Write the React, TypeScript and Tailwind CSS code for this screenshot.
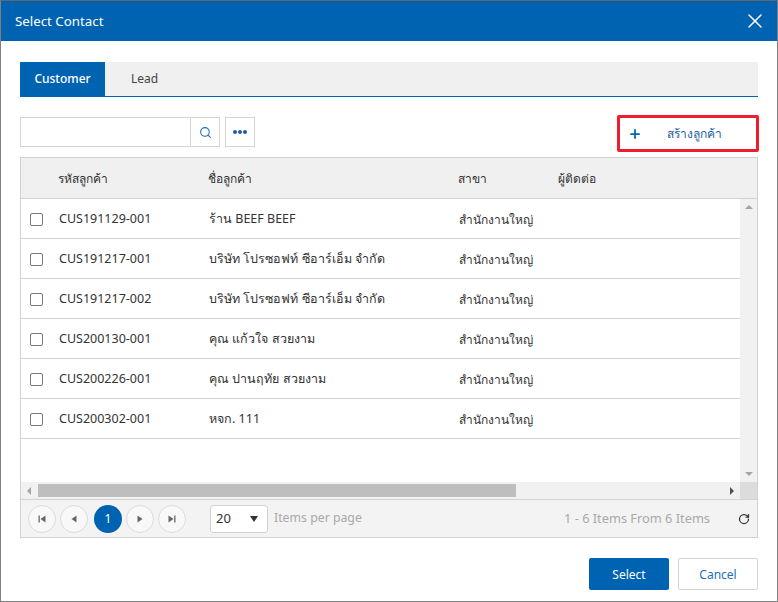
import React from "react";
import { Plus, RotateCw, Search, X } from "lucide-react";

const font = "font-['Noto_Sans',Tahoma,sans-serif]";

const rows = [
  { code: "CUS191129-001", name: "ร้าน BEEF BEEF" },
  { code: "CUS191217-001", name: "บริษัท โปรซอฟท์ ซีอาร์เอ็ม จำกัด" },
  { code: "CUS191217-002", name: "บริษัท โปรซอฟท์ ซีอาร์เอ็ม จำกัด" },
  { code: "CUS200130-001", name: "คุณ แก้วใจ สวยงาม" },
  { code: "CUS200226-001", name: "คุณ ปานฤทัย สวยงาม" },
  { code: "CUS200302-001", name: "หจก. 111" },
];

function PageButton({ d }: { d: string }) {
  return (
    <button className="flex h-7 w-7 items-center justify-center rounded-full border border-[#dcdcdc] bg-[#f8f8f8]">
      <svg width="10" height="10" viewBox="0 0 10 10" fill="#666666">
        <path d={d} />
      </svg>
    </button>
  );
}

export default function App() {
  return (
    <div className={`${font} flex h-[602px] w-[778px] flex-col border border-t-[#666666] border-x-[#808080] border-b-[#808080] bg-white text-xs text-[#333333]`}>
      {/* header */}
      <div className="flex h-10 shrink-0 items-center justify-between bg-[#0063b1] pl-[14px] pr-[10px] text-white">
        <span className="pt-[2px] text-[13.3px]">Select Contact</span>
        <X size={24} strokeWidth={1.5} />
      </div>

      <div className="flex flex-1 flex-col px-[19px]">
        {/* tabs */}
        <div className="mt-[21px] flex h-[35px] border-b border-[#0063b1] bg-[#f0f0f0]">
          <div className="flex w-[85px] items-center justify-center bg-[#0063b1] font-medium text-white">Customer</div>
          <div className="ml-[26px] flex items-center text-[#444444]">Lead</div>
        </div>

        {/* toolbar */}
        <div className="mt-[18px] flex h-[38px] items-start">
          <div className="mt-[2px] flex h-[30px] w-[200px] border border-[#d5d5d5]">
            <div className="flex-1" />
            <div className="flex w-[29px] items-center justify-center border-l border-[#d5d5d5] text-[#1e6fb8]">
              <Search size={13} strokeWidth={2} />
            </div>
          </div>
          <div className="ml-[5px] mt-[2px] flex h-[30px] w-[30px] items-center justify-center gap-[1.5px] border border-[#d5d5d5]">
            <span className="h-[3.5px] w-[3.5px] rounded-full bg-[#1e5f9f]" />
            <span className="h-[3.5px] w-[3.5px] rounded-full bg-[#1e5f9f]" />
            <span className="h-[3.5px] w-[3.5px] rounded-full bg-[#1e5f9f]" />
          </div>
          <div className="ml-auto mr-[-1px] flex h-[37px] w-[142px] items-center rounded-[2px] border-[3px] border-[#ed1c2e] pl-[8px]">
            <Plus size={14} strokeWidth={3} className="text-[#0063b1]" />
            <span className="ml-[25px] text-[#1e5f9f]">สร้างลูกค้า</span>
          </div>
        </div>

        {/* grid */}
        <div className="mt-[4px] flex h-[381px] flex-col border border-[#d2d2d2]">
          <div className="flex h-[41px] shrink-0 items-center border-b border-[#d2d2d2] bg-[#f0f0f0] pt-[2px] font-medium">
            <span className="ml-[37px] w-[150px]">รหัสลูกค้า</span>
            <span className="w-[250px]">ชื่อลูกค้า</span>
            <span className="w-[100px]">สาขา</span>
            <span>ผู้ติดต่อ</span>
          </div>

          <div className="flex min-h-0 flex-1">
            <div className="flex-1">
              {rows.map((row) => (
                <div key={row.code} className="flex h-10 items-center border-b border-[#d2d2d2] text-[12.5px]">
                  <span className="ml-[9px] mt-[1px] h-[13px] w-[13px] rounded-[2px] border border-[#777777] bg-white" />
                  <span className="ml-[16px] w-[150px] pt-[2px]">{row.code}</span>
                  <span className="w-[250px] pt-[2px]">{row.name}</span>
                  <span className="whitespace-nowrap pt-[2px] text-xs">สำนักงานใหญ่</span>
                </div>
              ))}
            </div>
            <div className="flex w-[17px] flex-col items-center justify-between bg-[#f1f1f1] py-[6px]">
              <span className="h-0 w-0 border-x-[4px] border-b-[4px] border-x-transparent border-b-[#a3a3a3]" />
              <span className="h-0 w-0 border-x-[4px] border-t-[4px] border-x-transparent border-t-[#a3a3a3]" />
            </div>
          </div>

          {/* horizontal scrollbar */}
          <div className="flex h-[18px] shrink-0 items-center border-b border-[#d2d2d2] bg-[#f1f1f1]">
            <span className="ml-[6px] h-0 w-0 border-y-[4px] border-r-[4px] border-y-transparent border-r-[#a3a3a3]" />
            <div className="ml-[7px] h-[13px] w-[478px] bg-[#bebebe]" />
            <span className="ml-auto mr-[6px] h-0 w-0 border-y-[4px] border-l-[4px] border-y-transparent border-l-[#505050]" />
            <div className="h-full w-[17px] bg-[#dcdcdc]" />
          </div>

          {/* pager */}
          <div className="flex h-[37px] shrink-0 items-center bg-[#f3f3f3] pl-[7px] pr-[7px]">
            <div className="flex items-center gap-[4px]">
              <PageButton d="M1.5 1.5h1.3v7H1.5zM8.5 1.5v7L3.5 5z" />
              <PageButton d="M7.5 1.5v7L2.5 5z" />
              <button className="ml-[2px] flex h-7 w-7 items-center justify-center rounded-full bg-[#0063b1] text-white">1</button>
              <PageButton d="M2.5 1.5v7L7.5 5z" />
              <PageButton d="M8.5 1.5H7.2v7h1.3zM1.5 1.5v7L6.5 5z" />
            </div>
            <div className="ml-[24px] flex h-7 w-[58px] items-center justify-between rounded-[3px] border border-[#d2d2d2] bg-white pl-[5px] pr-[9px] text-[13px]">
              <span>20</span>
              <span className="h-0 w-0 border-x-[4px] border-t-[6px] border-x-transparent border-t-[#333333]" />
            </div>
            <span className="ml-[6px] text-[12.3px] text-[#a9a9a9]">Items per page</span>
            <span className="ml-auto text-[12.8px] text-[#a9a9a9]">1 - 6 Items From 6 Items</span>
            <RotateCw size={12} strokeWidth={2.5} className="ml-[28px] text-[#333333]" />
          </div>
        </div>

        {/* footer */}
        <div className="mt-[20px] flex justify-end gap-[9px]">
          <button className="h-8 w-20 rounded-[2px] bg-[#0063b1] pt-[1px] text-white">Select</button>
          <button className="h-8 w-20 rounded-[2px] border border-[#d5d5d5] bg-white pt-[1px] text-[#1e6fb8]">Cancel</button>
        </div>
      </div>
    </div>
  );
}
